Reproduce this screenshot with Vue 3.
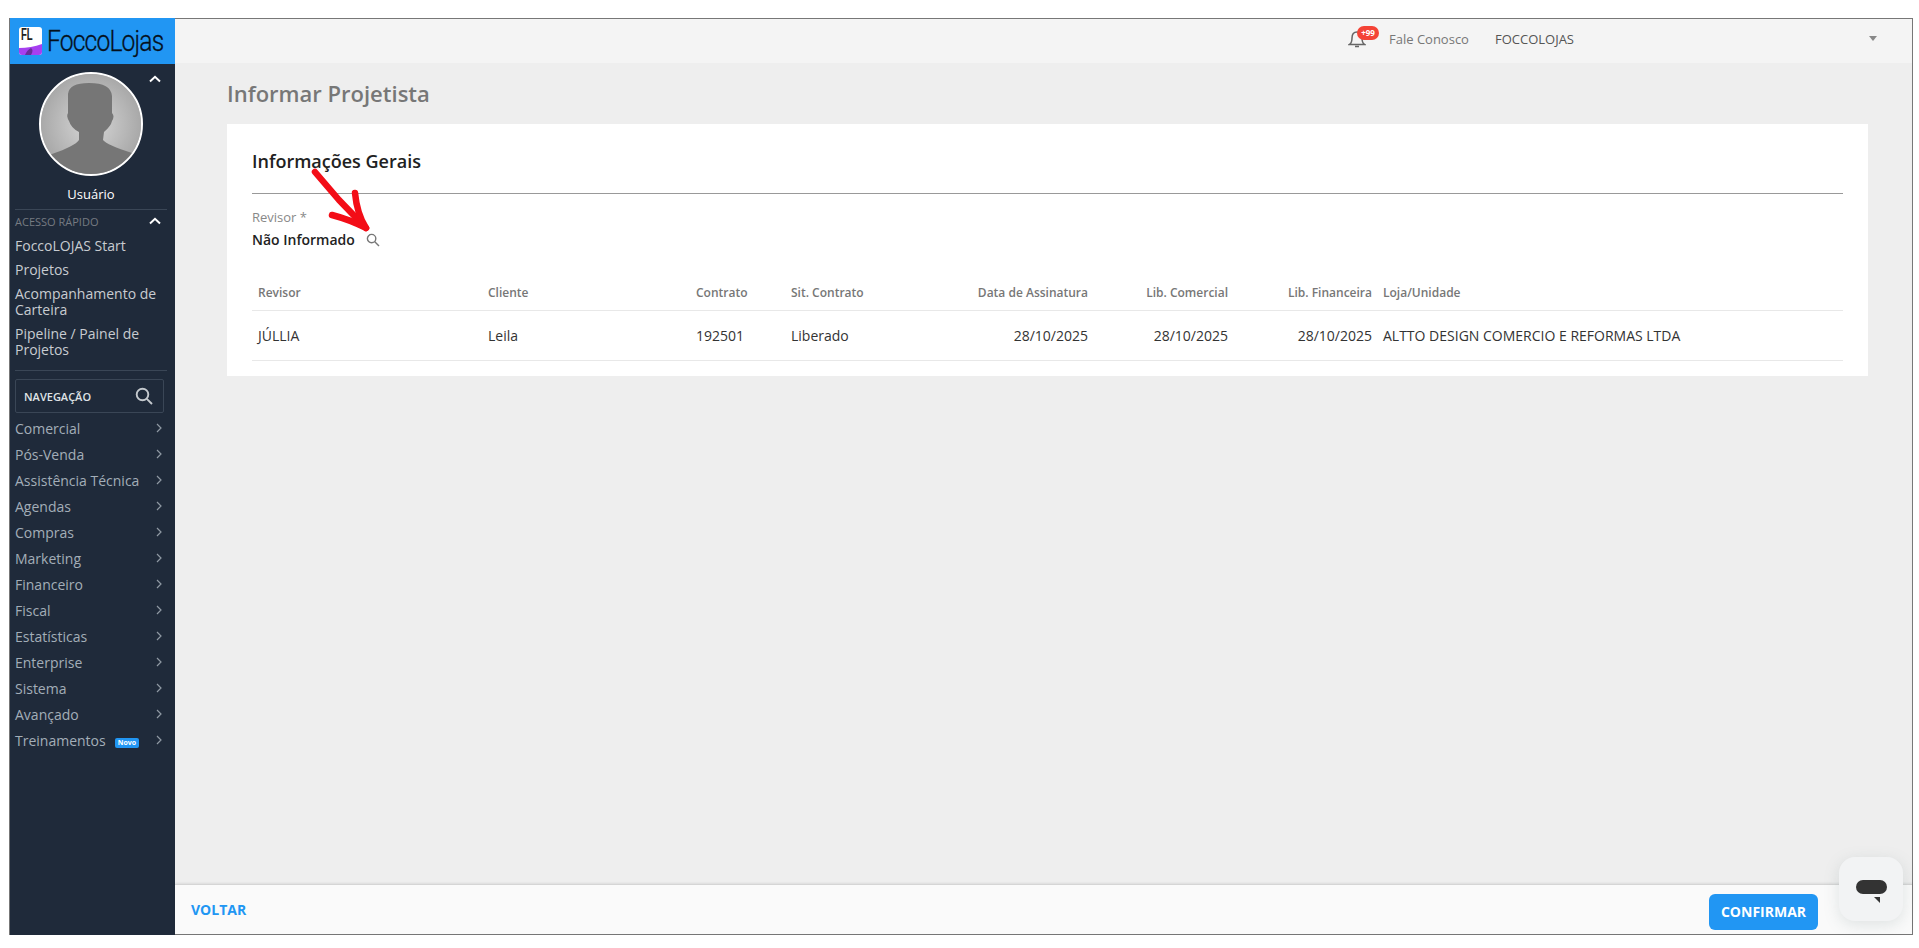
<script setup>
const quick = ['FoccoLOJAS Start', 'Projetos', 'Acompanhamento de Carteira', 'Pipeline / Painel de Projetos']
const nav = ['Comercial', 'Pós-Venda', 'Assistência Técnica', 'Agendas', 'Compras', 'Marketing', 'Financeiro', 'Fiscal', 'Estatísticas', 'Enterprise', 'Sistema', 'Avançado', 'Treinamentos']
const columns = [
  { label: 'Revisor', value: 'JÚLLIA' },
  { label: 'Cliente', value: 'Leila' },
  { label: 'Contrato', value: '192501' },
  { label: 'Sit. Contrato', value: 'Liberado' },
  { label: 'Data de Assinatura', value: '28/10/2025', right: true },
  { label: 'Lib. Comercial', value: '28/10/2025', right: true },
  { label: 'Lib. Financeira', value: '28/10/2025', right: true },
  { label: 'Loja/Unidade', value: 'ALTTO DESIGN COMERCIO E REFORMAS LTDA' }
]
</script>

<template>
  <div class="page">
    <div class="frame">
      <aside class="sidebar">
        <div class="brand">
          <div class="brand-mark">
            <span class="brand-fl">FL</span>
            <svg class="brand-wave" viewBox="0 0 23 11" preserveAspectRatio="none">
              <path d="M0 4 Q12 4 23 0 V11 H0 Z" fill="#a63ff0" />
              <path d="M6 11 Q8 6 12 4 Q15 6 12 11 Z" fill="#6a2b9c" />
            </svg>
          </div>
          <span class="brand-name">FoccoLojas</span>
        </div>

        <div class="profile">
          <svg class="chev-up profile-chev" viewBox="0 0 12 8"><path d="M1 6.5 L6 1.8 L11 6.5" /></svg>
          <div class="avatar">
            <svg viewBox="0 0 100 100" width="100" height="100">
              <defs>
                <radialGradient id="avatarBg" cx="50%" cy="50%" r="55%">
                  <stop offset="0%" stop-color="#d8d8d8" />
                  <stop offset="100%" stop-color="#a4a4a4" />
                </radialGradient>
              </defs>
              <rect width="100" height="100" fill="url(#avatarBg)" />
              <path d="M27 20 Q28 9 48 9 Q70 9 71 22 L71 39 Q74 42 71 47 Q70 52 63 58 L62 66 Q66 71 91 79 L100 84 V100 H0 V84 L11 80 Q34 72 38 66 L38 58 Q30 54 28 47 Q25 42 27 39 Z" fill="#767676" />
            </svg>
          </div>
          <div class="user">Usuário</div>
        </div>

        <div class="quick-head">
          <span>ACESSO RÁPIDO</span>
          <svg class="chev-up" viewBox="0 0 12 8"><path d="M1 6.5 L6 1.8 L11 6.5" /></svg>
        </div>
        <ul class="quick">
          <li v-for="q in quick" :key="q">{{ q }}</li>
        </ul>

        <div class="nav-search">
          <span>NAVEGAÇÃO</span>
          <svg viewBox="0 0 18 18" width="18" height="18"><circle cx="7.5" cy="7.5" r="5.8" /><path d="M11.8 11.8 L17 17" /></svg>
        </div>

        <ul class="nav">
          <li v-for="n in nav" :key="n">
            <span class="nav-label">{{ n }}<em v-if="n === 'Treinamentos'" class="novo">Novo</em></span>
            <svg viewBox="0 0 6 10" width="6" height="10"><path d="M1 1 L5 5 L1 9" /></svg>
          </li>
        </ul>
      </aside>

      <div class="workspace">
        <header class="topbar">
          <span class="bell">
            <svg viewBox="0 0 18 20" width="18" height="20"><path d="M1.5 15.5 Q4 14 4 9 Q4 3 9 3 Q14 3 14 9 Q14 14 16.5 15.5 Z M7 17.5 H11" /></svg>
            <b class="bell-badge">+99</b>
          </span>
          <span class="contact">Fale Conosco</span>
          <span class="company">FOCCOLOJAS</span>
          <span class="caret"></span>
        </header>

        <main class="content">
          <h1>Informar Projetista</h1>
          <section class="card">
            <h2>Informações Gerais</h2>
            <div class="field">
              <label>Revisor *</label>
              <div class="field-value">
                <span>Não Informado</span>
                <svg viewBox="0 0 14 14" width="14" height="14"><circle cx="5.6" cy="5.6" r="4.2" /><path d="M8.8 8.8 L13 13" /></svg>
              </div>
            </div>
            <div class="table">
              <div v-for="c in columns" :key="c.label" class="col" :class="{ right: c.right }">
                <div class="th">{{ c.label }}</div>
                <div class="td">{{ c.value }}</div>
              </div>
            </div>
            <svg class="arrow" viewBox="0 0 70 70" width="70" height="70">
              <path d="M8 8 L32 36 L59 64" />
              <path d="M48 29 Q50 50 59 64 Q44 56 25 51" />
            </svg>
          </section>
        </main>

        <footer class="footer">
          <a class="back">VOLTAR</a>
          <button class="confirm">CONFIRMAR</button>
        </footer>
      </div>

      <div class="chat">
        <span class="chat-bubble"></span>
        <span class="chat-tail"></span>
      </div>
    </div>
  </div>
</template>

<style>
html, body { margin: 0; background: #fff; }
</style>

<style scoped>
* { box-sizing: border-box; }
.page {
  width: 1919px;
  height: 948px;
  padding: 18px 6px 13px 9px;
  background: #fff;
  font-family: "Open Sans", "Noto Sans", sans-serif;
}
.frame {
  position: relative;
  display: flex;
  height: 100%;
  border: 1px solid #777;
}
.sidebar {
  width: 165px;
  flex: none;
  margin: -1px 0 -1px 0;
  background: #1f2a3a;
  color: #c9ced4;
}
.brand {
  display: flex;
  align-items: center;
  gap: 5px;
  height: 46px;
  padding-left: 9px;
  background: #2196f3;
}
.brand-mark {
  position: relative;
  flex: none;
  width: 23px;
  height: 28px;
  border-radius: 3px;
  background: #fff;
  overflow: hidden;
}
.brand-fl {
  position: absolute;
  left: 2px;
  top: 0;
  font: 700 16px/16px "Liberation Sans", sans-serif;
  color: #222;
  transform: scaleX(0.6);
  transform-origin: left top;
}
.brand-wave {
  position: absolute;
  left: 0;
  bottom: 0;
  width: 23px;
  height: 11px;
  display: block;
}
.brand-name {
  display: inline-block;
  font: 300 30px/32px Roboto, sans-serif;
  letter-spacing: -1px;
  color: #05101c;
  -webkit-text-stroke: 0.3px #05101c;
  transform: scaleX(0.82);
  transform-origin: left center;
  white-space: nowrap;
}
.profile {
  position: relative;
  height: 146px;
  padding-top: 8px;
  margin: 0 8px 0 5px;
  border-bottom: 1px solid #3a4656;
}
.profile-chev {
  position: absolute;
  right: 6px;
  top: 11px;
}
.chev-up {
  width: 12px;
  height: 8px;
  display: block;
  flex: none;
}
.chev-up path {
  fill: none;
  stroke: #fff;
  stroke-width: 2;
}
.avatar {
  width: 104px;
  height: 104px;
  margin: 0 auto;
  border: 2px solid #fff;
  border-radius: 50%;
  overflow: hidden;
  background: #aaa;
}
.avatar svg { display: block; }
.user {
  margin-top: 9px;
  text-align: center;
  font-size: 13px;
  line-height: 18px;
  color: #fff;
}
.quick-head {
  display: flex;
  align-items: center;
  justify-content: space-between;
  padding: 3px 14px 5px 5px;
  height: 24px;
  font-size: 11px;
  color: #767b82;
}
.quick {
  list-style: none;
  margin: 0 8px 0 5px;
  padding: 0 0 8px 0;
  border-bottom: 1px solid #3a4656;
  font-size: 14px;
  line-height: 16px;
  color: #c8ccd1;
}
.quick li { padding: 4px 0; }
.nav-search {
  display: flex;
  align-items: center;
  justify-content: space-between;
  height: 34px;
  margin: 8px 11px 2px 5px;
  padding: 0 10px 0 8px;
  border: 1px solid #3a4656;
  border-radius: 2px;
  font-size: 11px;
  font-weight: 600;
  color: #dfe3e6;
}
.nav-search svg {
  fill: none;
  stroke: #c4c9ce;
  stroke-width: 1.9;
}
.nav {
  list-style: none;
  margin: 0;
  padding: 0 13px 0 5px;
  font-size: 14px;
  color: #a3aeb8;
}
.nav li {
  display: flex;
  align-items: center;
  justify-content: space-between;
  height: 26px;
}
.nav svg {
  fill: none;
  stroke: #8f99a3;
  stroke-width: 1.2;
  flex: none;
}
.novo {
  display: inline-block;
  margin-left: 9px;
  padding: 0 3px;
  border-radius: 2px;
  background: #2196f3;
  color: #fff;
  font: 700 7px/10px "Open Sans", sans-serif;
  vertical-align: 1px;
}
.workspace {
  flex: 1;
  min-width: 0;
  display: flex;
  flex-direction: column;
  background: #eee;
}
.topbar {
  display: flex;
  align-items: center;
  height: 44px;
  flex: none;
  padding: 0 35px 5px 0;
  background: #f4f4f4;
  font-size: 13px;
}
.bell {
  position: relative;
  margin-left: auto;
  width: 18px;
  height: 20px;
  margin-right: 23px;
}
.bell svg {
  fill: none;
  stroke: #666;
  stroke-width: 1.5;
  display: block;
}
.bell-badge {
  position: absolute;
  left: 9px;
  top: -3px;
  width: 22px;
  height: 14px;
  border-radius: 7px;
  background: #f44336;
  color: #fff;
  font: 700 8px/14px "Open Sans", sans-serif;
  text-align: center;
}
.contact { color: #777; margin-right: 26px; }
.company { color: #555; margin-right: 295px; }
.caret {
  width: 0;
  height: 0;
  border-left: 4px solid transparent;
  border-right: 4px solid transparent;
  border-top: 5px solid #888;
}
.content {
  flex: 1;
  padding: 16px 44px 0 52px;
  min-height: 0;
}
h1 {
  margin: 0 0 16px;
  font-size: 22px;
  line-height: 29px;
  font-weight: 600;
  color: #777;
}
.card {
  position: relative;
  height: 252px;
  padding: 25px 25px 0 25px;
  background: #fff;
}
h2 {
  margin: 0;
  padding-bottom: 20px;
  border-bottom: 1px solid #999;
  font-size: 18px;
  line-height: 24px;
  font-weight: 600;
  color: #212121;
}
.field {
  padding-top: 15px;
}
.field label {
  display: block;
  font-size: 13px;
  line-height: 17px;
  color: #888;
}
.field-value {
  display: flex;
  align-items: center;
  gap: 11px;
  height: 19px;
  margin-top: 4px;
  font-size: 14px;
  font-weight: 600;
  color: #222;
}
.field-value svg {
  fill: none;
  stroke: #777;
  stroke-width: 1.4;
}
.arrow {
  position: absolute;
  left: 80px;
  top: 40px;
  fill: none;
  stroke: #f30d17;
  stroke-width: 6.5;
  stroke-linecap: round;
  stroke-linejoin: round;
  overflow: visible;
}
.table {
  display: grid;
  grid-template-columns: 230px 208px 95px 121px 187px 140px 144px 466px;
  margin-top: 29px;
}
.col { min-width: 0; }
.th, .td {
  padding: 0 5px 0 6px;
  white-space: nowrap;
}
.th {
  height: 33px;
  line-height: 30px;
  font-size: 12px;
  font-weight: 600;
  color: #777;
  border-bottom: 1px solid #e8e8e8;
}
.td {
  height: 50px;
  line-height: 49px;
  font-size: 14px;
  color: #333;
  border-bottom: 1px solid #e8e8e8;
}
.right .th, .right .td { text-align: right; }
.footer {
  display: flex;
  align-items: center;
  justify-content: space-between;
  height: 50px;
  flex: none;
  padding: 0 94px 0 16px;
  background: #fafafa;
  border-top: 1px solid #d5d5d5;
  box-shadow: 0 -1px 2px rgba(0, 0, 0, 0.08);
}
.back {
  font-size: 14px;
  font-weight: 700;
  color: #2196f3;
}
.confirm {
  width: 109px;
  height: 36px;
  border: 0;
  border-radius: 6px;
  background: #2196f3;
  color: #fff;
  font: 700 14px "Open Sans", sans-serif;
  position: relative;
  top: 2px;
}
.chat {
  position: absolute;
  right: 9px;
  bottom: 13px;
  width: 64px;
  height: 64px;
  border-radius: 16px;
  background: #f2f3f4;
  box-shadow: 0 4px 16px rgba(100, 120, 120, 0.18);
}
.chat-bubble {
  position: absolute;
  left: 17px;
  top: 23px;
  width: 31px;
  height: 14px;
  border-radius: 7px;
  background: #333;
}
.chat-tail {
  position: absolute;
  left: 35px;
  top: 40px;
  width: 0;
  height: 0;
  border-top: 6px solid #333;
  border-left: 6px solid transparent;
}
</style>
